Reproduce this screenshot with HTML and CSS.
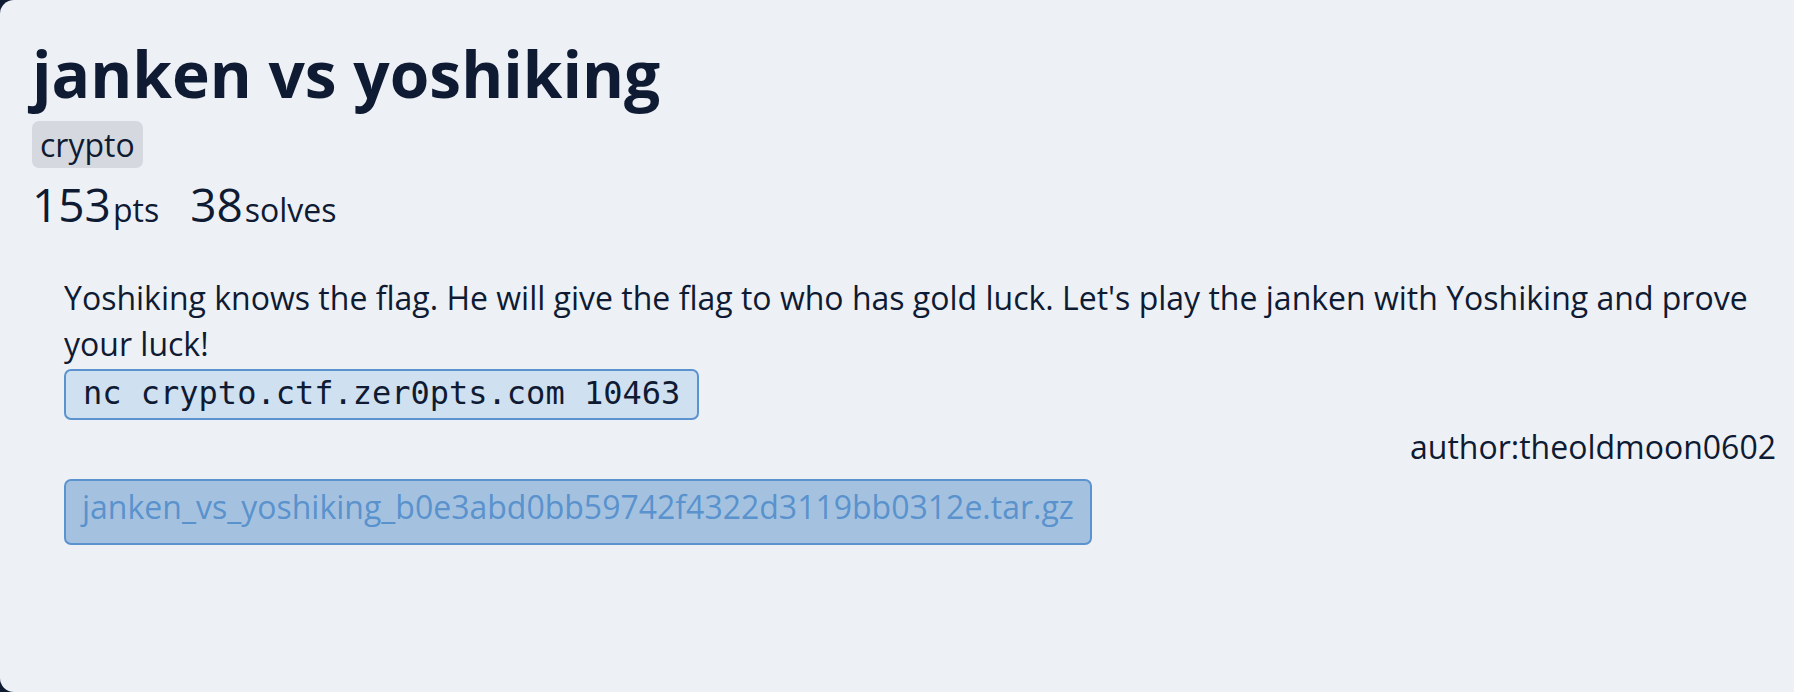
FILE: index.html
```html
<!DOCTYPE html>
<html>
<head>
<meta charset="utf-8">
<link rel="stylesheet" href="styles.css">
</head>
<body>
<div class="card">
  <h1 class="title">janken vs yoshiking</h1>
  <div class="tags"><span class="tag">crypto</span></div>
  <div class="stats">
    <span class="stat"><span class="num">153</span><span class="unit">pts</span></span>
    <span class="stat"><span class="num">38</span><span class="unit">solves</span></span>
  </div>
  <div class="body">
    <p class="desc">Yoshiking knows the flag. He will give the flag to who has gold luck. Let's play the janken with Yoshiking and prove your luck!</p>
    <div class="codeline"><code class="code">nc crypto.ctf.zer0pts.com 10463</code></div>
    <div class="author">author:theoldmoon0602</div>
    <div class="files"><a class="file" href="#">janken_vs_yoshiking_b0e3abd0bb59742f4322d3119bb0312e.tar.gz</a></div>
  </div>
</div>
</body>
</html>
```
FILE: styles.css
```css
html, body {
  margin: 0;
  padding: 0;
  height: 100%;
}
body {
  background: #0f1a33;
  font-family: "Open Sans", "Noto Sans", sans-serif;
  color: #0f1a33;
  overflow: hidden;
}
.card {
  box-sizing: border-box;
  height: 692px;
  background: #edf1f6;
  border-radius: 14px 0 0 14px;
  padding: 35px 18px 0 32px;
}
.title {
  margin: 0;
  font-size: 64px;
  font-weight: 700;
  line-height: 77px;
}
.tags {
  display: flex;
  margin-top: 9px;
}
.tag {
  background: #d5d9df;
  border-radius: 7px;
  padding: 0 8px;
  font-size: 32px;
  line-height: 47px;
}
.stats {
  display: flex;
  align-items: baseline;
  gap: 31px;
  margin-top: 7px;
  font-size: 46px;
  line-height: 58px;
}
.num {
  font-size: 46px;
}
.unit {
  font-size: 32px;
  line-height: 1;
  margin-left: 2px;
}
.body {
  padding-left: 32px;
  margin-top: 42px;
}
.desc {
  margin: 0;
  font-size: 32px;
  line-height: 46px;
}
.codeline {
  display: flex;
  margin-top: 2px;
}
.code {
  font-family: "DejaVu Sans Mono", monospace;
  font-size: 32px;
  line-height: 45px;
  background: #cfe0f0;
  border: 2px solid #5b93cf;
  border-radius: 7px;
  padding: 0 17px 2px;
}
.author {
  text-align: right;
  font-size: 32px;
  line-height: 46px;
  margin-top: 4px;
}
.files {
  display: flex;
  margin-top: 9px;
}
.file {
  display: block;
  background: #a4c2e0;
  border: 2px solid #5b93cf;
  border-radius: 7px;
  color: #5a92cd;
  text-decoration: none;
  font-size: 32px;
  line-height: 46px;
  padding: 3px 16px 13px;
}
```
